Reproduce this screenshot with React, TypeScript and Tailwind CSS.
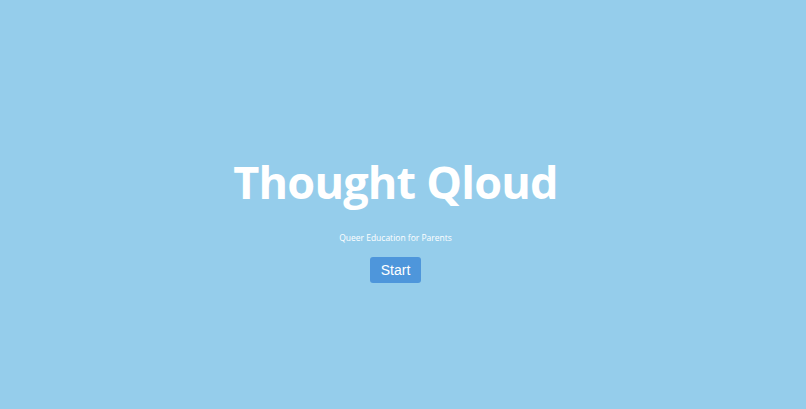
import React from 'react';

export default function App() {
  return (
    <div className="w-full h-[409px] bg-[#95cdeb] flex flex-col items-center pt-[150px] pr-[15px]">
      <h1 className="text-white font-bold text-[45px] leading-[64px] tracking-[-0.8px] font-['Open_Sans',sans-serif]">
        Thought Qloud
      </h1>
      <p className="mt-[17px] text-white text-[8.5px] leading-[14px] font-['Open_Sans',sans-serif]">
        Queer Education for Parents
      </p>
      <button className="mt-[12px] w-[51px] h-[26px] rounded-[3px] bg-[#4e96db] text-white text-[14px] font-['Liberation_Sans',sans-serif]">
        Start
      </button>
    </div>
  );
}
